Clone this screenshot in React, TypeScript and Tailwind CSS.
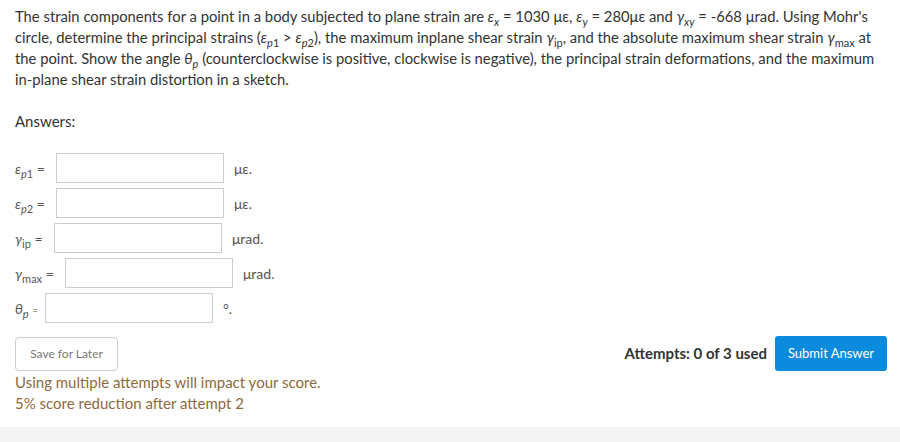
import React from 'react';

const Sub = ({ children }: { children: React.ReactNode }) => (
  <span className="text-[11px] leading-none align-[-4px] not-italic">{children}</span>
);

const rows = [
  { key: 'ep1', label: <><i>ε</i><Sub><i>p</i>1</Sub> =</>, lw: 'w-[41px]', unit: 'με.' },
  { key: 'ep2', label: <><i>ε</i><Sub><i>p</i>2</Sub> =</>, lw: 'w-[41px]', unit: 'με.' },
  { key: 'gip', label: <><i>γ</i><Sub>ip</Sub> =</>, lw: 'w-[39px]', unit: 'μrad.' },
  { key: 'gmax', label: <><i>γ</i><Sub>max</Sub> =</>, lw: 'w-[50px]', unit: 'μrad.' },
  { key: 'tp', label: <><i>θ</i><Sub><i>p</i></Sub> <span className="text-[10px]">=</span></>, lw: 'w-[30px]', unit: '°.' },
];

export default function App() {
  return (
    <div className="w-[900px] h-[442px] bg-white text-[#333] flex flex-col" style={{ fontFamily: 'Lato, "Open Sans", sans-serif' }}>
      <div className="flex-1 px-[15px]">
        {/* Question */}
        <p className="pt-[6px] text-[14.8px] leading-[21px] whitespace-nowrap">
          The strain components for a point in a body subjected to plane strain are <i>ε</i><Sub><i>x</i></Sub> = 1030 με, <i>ε</i><Sub><i>y</i></Sub> = 280με and <i>γ</i><Sub><i>xy</i></Sub> = -668 μrad. Using Mohr's
          <br />
          circle, determine the principal strains (<i>ε</i><Sub><i>p</i>1</Sub> &gt; <i>ε</i><Sub><i>p</i>2</Sub>), the maximum inplane shear strain <i>γ</i><Sub>ip</Sub>, and the absolute maximum shear strain <i>γ</i><Sub>max</Sub> at
          <br />
          the point. Show the angle <i>θ</i><Sub><i>p</i></Sub> (counterclockwise is positive, clockwise is negative), the principal strain deformations, and the maximum
          <br />
          in-plane shear strain distortion in a sketch.
        </p>

        <p className="mt-[21px] text-[15px] leading-[21px]">Answers:</p>

        {/* Answer rows */}
        <div className="mt-[21px] flex flex-col gap-[5px]">
          {rows.map((r) => (
            <div key={r.key} className="flex items-center h-[30px]">
              <span className={`${r.lw} shrink-0 text-[14px] text-[#555] whitespace-nowrap`}>{r.label}</span>
              <div className="w-[168px] h-[30px] border border-[#ccc] bg-white" />
              <span className="ml-[10px] text-[14px] text-[#555]">{r.unit}</span>
            </div>
          ))}
        </div>

        {/* Actions */}
        <div className="mt-[13px] mr-[-2px] flex items-center justify-between">
          <button className="w-[103px] h-[34px] border border-[#ccc] rounded-[4px] bg-white text-[12px] text-[#777]">
            Save for Later
          </button>
          <div className="flex items-center gap-[8px]">
            <span className="text-[15px] font-bold text-[#333]">Attempts: 0 of 3 used</span>
            <button className="w-[112px] h-[35px] rounded-[3px] bg-[#0b8ade] text-white text-[13px]">
              Submit Answer
            </button>
          </div>
        </div>

        <p className="mt-[1px] text-[15px] leading-[21px] text-[#8e6a3d]">
          Using multiple attempts will impact your score.
          <br />
          5% score reduction after attempt 2
        </p>
      </div>
      <div className="h-[15px] bg-[#f5f5f5]" />
    </div>
  );
}
